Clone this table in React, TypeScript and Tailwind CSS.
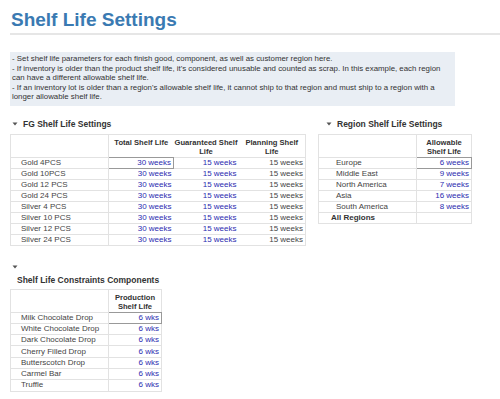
const FG_ROWS = [
  "Gold 4PCS",
  "Gold 10PCS",
  "Gold 12 PCS",
  "Gold 24 PCS",
  "Silver 4 PCS",
  "Silver 10 PCS",
  "Silver 12 PCS",
  "Silver 24 PCS",
];

const REGIONS: { name: string; weeks: number }[] = [
  { name: "Europe", weeks: 6 },
  { name: "Middle East", weeks: 9 },
  { name: "North America", weeks: 7 },
  { name: "Asia", weeks: 16 },
  { name: "South America", weeks: 8 },
];

const COMPONENTS = [
  "Milk Chocolate Drop",
  "White Chocolate Drop",
  "Dark Chocolate Drop",
  "Cherry Filled Drop",
  "Butterscotch Drop",
  "Carmel Bar",
  "Truffle",
];

function Caret() {
  return (
    <svg width="6" height="4" viewBox="0 0 6 4" className="shrink-0">
      <path d="M0.5 0.5 L5.5 0.5 L3 3.5 Z" fill="#555" />
    </svg>
  );
}

function SectionTitle({ label }: { label: string }) {
  return (
    <div className="flex h-[12px] items-center">
      <span className="flex w-[17px] justify-center">
        <Caret />
      </span>
      <span className="text-[8.5px] font-bold text-[#333]">{label}</span>
    </div>
  );
}

// first data cell in each grid shows as the selected one
function valueCell(selected: boolean) {
  return selected
    ? "h-[11px] border border-[#999] px-[2px] text-right whitespace-nowrap text-[#2b2bb0]"
    : "h-[11px] border-t border-[#e2e2e2] px-[2px] text-right whitespace-nowrap text-[#2b2bb0]";
}

const headCell = "pt-[3px] text-center text-[7.6px] font-bold leading-[9.5px] whitespace-nowrap text-[#333]";

export default function App() {
  return (
    <div className="h-[399px] w-[500px] overflow-hidden bg-white font-['Liberation_Sans',Arial,sans-serif] text-[#333]">
      <div className="pl-[11px] pt-[9px]">
        <h1 className="text-[19px] font-bold leading-[22px] text-[#3a7ab2]">Shelf Life Settings</h1>
      </div>
      <div className="ml-[10px] mt-[2px] h-[2px] bg-[#e6e6e6]" />

      <div className="ml-[10px] mt-[17px] w-[445px] bg-[#e9eef4] px-[2px] pb-[4px] pt-[2px] text-[7.85px] leading-[9.5px] whitespace-nowrap text-[#333]">
        - Set shelf life parameters for each finish good, component, as well as customer region here.
        <br />
        - If inventory is older than the product shelf life, it's considered unusable and counted as scrap. In this example, each region
        <br />
        can have a different allowable shelf life.
        <br />
        - If an inventory lot is older than a region's allowable shelf life, it cannot ship to that region and must ship to a region with a
        <br />
        longer allowable shelf life.
      </div>

      <div className="mt-[12px] flex items-start text-[8px] leading-[10px]">
        {/* FG settings */}
        <div className="ml-[6px] flex flex-col">
          <SectionTitle label="FG Shelf Life Settings" />
          <table className="ml-[4px] mt-[4px] w-[295px] table-fixed border-collapse border border-[#e2e2e2]">
            <colgroup>
              <col className="w-[98px]" />
              <col className="w-[65px]" />
              <col className="w-[65px]" />
              <col className="w-[67px]" />
            </colgroup>
            <thead>
              <tr className="h-[23px] align-top">
                <th className="border-r border-[#e2e2e2]" />
                <th className={headCell}>Total Shelf Life</th>
                <th className={headCell}>
                  Guaranteed Shelf
                  <br />
                  Life
                </th>
                <th className={headCell}>
                  Planning Shelf
                  <br />
                  Life
                </th>
              </tr>
            </thead>
            <tbody>
              {FG_ROWS.map((name, i) => (
                <tr key={name} className="h-[11px]">
                  <td className="border-t border-r border-[#e2e2e2] pl-[10px] whitespace-nowrap text-[#444]">{name}</td>
                  <td className={valueCell(i === 0)}>30 weeks</td>
                  <td className="border-t border-[#e2e2e2] px-[2px] text-right text-[#2b2bb0]">15 weeks</td>
                  <td className="border-t border-[#e2e2e2] px-[2px] text-right text-[#444]">15 weeks</td>
                </tr>
              ))}
            </tbody>
          </table>
        </div>

        {/* Region settings */}
        <div className="ml-[14px] flex flex-col">
          <SectionTitle label="Region Shelf Life Settings" />
          <table className="ml-[-2px] mt-[4px] w-[153px] table-fixed border-collapse border border-[#e2e2e2]">
            <colgroup>
              <col className="w-[98px]" />
              <col className="w-[55px]" />
            </colgroup>
            <thead>
              <tr className="h-[23px] align-top">
                <th className="border-r border-[#e2e2e2]" />
                <th className={headCell}>
                  Allowable
                  <br />
                  Shelf Life
                </th>
              </tr>
            </thead>
            <tbody>
              {REGIONS.map((r, i) => (
                <tr key={r.name} className="h-[11px]">
                  <td className="border-t border-r border-[#e2e2e2] pl-[17px] whitespace-nowrap text-[#444]">{r.name}</td>
                  <td className={valueCell(i === 0)}>{r.weeks} weeks</td>
                </tr>
              ))}
              <tr className="h-[11px]">
                <td className="border-t border-r border-[#e2e2e2] pl-[12px] font-bold whitespace-nowrap text-[#333]">All Regions</td>
                <td className="border-t border-[#e2e2e2]" />
              </tr>
            </tbody>
          </table>
        </div>
      </div>

      {/* Components */}
      <div className="mt-[17px] flex flex-col items-start text-[8px] leading-[10px]">
        <div className="ml-[12px] flex h-[8px] items-center">
          <Caret />
        </div>
        <div className="ml-[17px] mt-[3px] text-[8.5px] font-bold leading-[12px] text-[#333]">
          Shelf Life Constraints Components
        </div>
        <table className="ml-[10px] mt-[3px] w-[151px] table-fixed border-collapse border border-[#e2e2e2]">
          <colgroup>
            <col className="w-[98px]" />
            <col className="w-[53px]" />
          </colgroup>
          <thead>
            <tr className="h-[21px] align-top">
              <th className="border-r border-[#e2e2e2]" />
              <th className={headCell}>
                Production
                <br />
                Shelf Life
              </th>
            </tr>
          </thead>
          <tbody>
            {COMPONENTS.map((name, i) => (
              <tr key={name} className="h-[11.3px]">
                <td className="border-t border-r border-[#e2e2e2] pl-[10px] whitespace-nowrap text-[#444]">{name}</td>
                <td className={valueCell(i === 0)}>6 wks</td>
              </tr>
            ))}
          </tbody>
        </table>
      </div>
    </div>
  );
}
